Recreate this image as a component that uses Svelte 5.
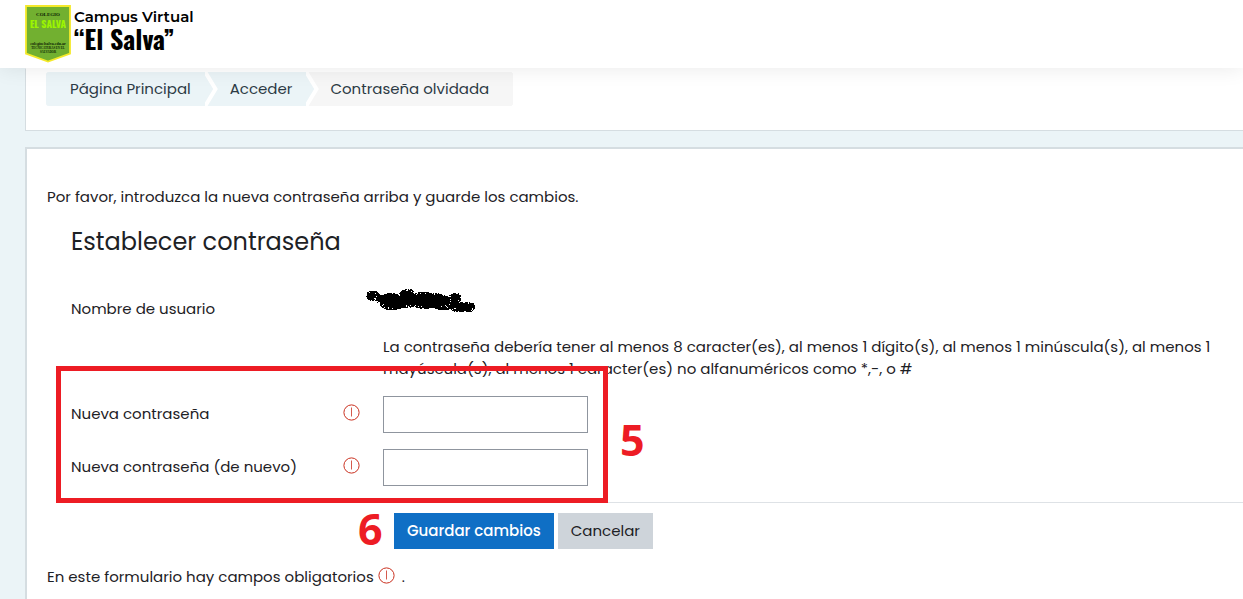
<script>
  const crumbs = ['Página Principal', 'Acceder', 'Contraseña olvidada'];
  const fields = [
    { id: 'password', label: 'Nueva contraseña' },
    { id: 'password2', label: 'Nueva contraseña (de nuevo)' }
  ];

  // Spray-brush blots: centre x, centre y, half width, half height.
  const blots = [
    [6, 6, 7, 5], [14, 9, 5, 4], [24, 9, 10, 6], [25, 14, 12, 6], [40, 5, 8, 6],
    [38, 12, 12, 6], [46, 10, 12, 5], [58, 13, 12, 6], [66, 10, 14, 7], [76, 13, 12, 7],
    [88, 8, 6, 5], [92, 17, 9, 5], [101, 17, 7, 5], [56, 6, 10, 4]
  ];
  let seed = 7;
  const random = () => (seed = (seed * 16807) % 2147483647) / 2147483647;
  const specks = blots
    .flatMap(([x, y, w, h]) =>
      Array.from({ length: w * h * 9 }, () => {
        const angle = random() * Math.PI * 2;
        const reach = random() ** 0.7;
        const px = Math.floor(x + Math.cos(angle) * reach * w);
        const py = Math.floor(y + Math.sin(angle) * reach * h);
        return `M${px} ${py}h1v1h-1z`;
      })
    )
    .join('');
</script>

{#snippet required()}
  <svg class="required" viewBox="0 0 17 17" role="img" aria-label="Obligatorio">
    <circle cx="8.5" cy="8.5" r="7.6" />
    <path d="M8.5 3.500v9" />
  </svg>
{/snippet}

<div class="page">
  <header>
    <a class="brand" href="#inicio">
      <svg class="shield" viewBox="0 0 46 58" aria-hidden="true">
        <path d="M1 1H45V48.500L23 56.500L1 48.500Z" fill="#72b030" stroke="#f4e92a" stroke-width="1.800" />
        <text class="serif" x="23" y="10.500" font-size="5">COLEGIO</text>
        <text class="crest" x="23" y="22.500" font-size="10">EL SALVA</text>
        <text class="serif" x="23" y="39.500" font-size="4">colegioelsalva.edu.ar</text>
        <text class="serif" x="23" y="43.500" font-size="3">TECNICATURAS EN EL</text>
        <text class="serif" x="23" y="47.500" font-size="3">SALVADOR</text>
      </svg>
      <span class="wordmark">
        <span class="campus">Campus Virtual</span>
        <span class="school">“El Salva”</span>
      </span>
    </a>
  </header>

  <main>
    <nav class="card trail" aria-label="Ruta">
      <ol>
        {#each crumbs as crumb, i}
          <li class:current={i === crumbs.length - 1}>
            {#if i < crumbs.length - 1}
              <a href="#ruta">{crumb}</a>
              <svg class="chevron" viewBox="0 0 14 34" aria-hidden="true">
                <path class="before" d="M0 0L10 17L0 34Z" />
                <path class="gap" d="M-1 -2L10.500 17L-1 36" />
              </svg>
            {:else}
              <span>{crumb}</span>
            {/if}
          </li>
        {/each}
      </ol>
    </nav>

    <section class="card content">
      <p class="intro">Por favor, introduzca la nueva contraseña arriba y guarde los cambios.</p>
      <form onsubmit={(e) => e.preventDefault()}>
        <h1>Establecer contraseña</h1>
        <div class="row user">
          <span>Nombre de usuario</span>
          <svg class="scribble" viewBox="0 0 108 24" aria-hidden="true">
            <path d={specks} />
          </svg>
        </div>
        <p class="hint">La contraseña debería tener al menos 8 caracter(es), al menos 1 dígito(s), al menos 1 minúscula(s), al menos 1 mayúscula(s), al menos 1 caracter(es) no alfanuméricos como *,-, o #</p>
        {#each fields as field}
          <div class="row field">
            <label for={field.id}>{field.label}</label>
            {@render required()}
            <input type="password" id={field.id} />
          </div>
        {/each}
        <div class="actions">
          <button class="save" type="submit">Guardar cambios</button>
          <button type="button">Cancelar</button>
        </div>
        <p class="note">En este formulario hay campos obligatorios {@render required()} .</p>
      </form>
    </section>
  </main>

  <div class="frame"></div>
  <span class="step five">5</span>
  <span class="step six">6</span>
</div>

<style>
  :global(body) {
    margin: 0;
    background: #ebf4f7;
  }
  .page {
    position: relative;
    display: flex;
    flex-direction: column;
    height: 100vh;
    overflow: hidden;
    color: #1d2125;
    font: 15px/22px Poppins, Inter, sans-serif;
  }
  header {
    position: relative;
    z-index: 1;
    flex: none;
    height: 63px;
    padding: 5px 25px 0;
    background: #fff;
    box-shadow: 0 0 20px rgba(0, 0, 0, 0.09);
  }
  .brand {
    display: inline-flex;
    gap: 3px;
    color: #000;
    text-decoration: none;
  }
  .shield {
    width: 46px;
    height: 58px;
  }
  .shield text {
    text-anchor: middle;
    font-weight: bold;
  }
  .serif {
    fill: #0c2203;
    font-family: "Liberation Serif", serif;
  }
  .crest {
    fill: #9cf500;
    font-family: Oswald, "Liberation Sans Narrow", sans-serif;
  }
  .wordmark {
    display: flex;
    flex-direction: column;
    white-space: nowrap;
  }
  .campus {
    font: 600 15px/23px Montserrat, Inter, sans-serif;
  }
  .school {
    font: bold 26px/22px Oswald, "Liberation Sans Narrow", sans-serif;
  }
  main {
    display: flex;
    flex: 1;
    flex-direction: column;
    gap: 16px;
    padding-left: 25px;
  }
  .card {
    border: 1px solid #d5dde1;
    border-right: 0;
    background: #fff;
  }
  .trail {
    padding: 3px 20px 24px;
    border-top: 1px solid #fff;
  }
  ol {
    display: inline-flex;
    margin: 0;
    padding: 0;
    overflow: hidden;
    border-radius: 3px;
    background: #f6f6f6;
    list-style: none;
    vertical-align: top;
  }
  li {
    display: flex;
    height: 34px;
    line-height: 34px;
    background: #ebf4f7;
  }
  li a,
  li span {
    padding-left: 24px;
    color: #2d3b45;
    text-decoration: none;
  }
  li:not(:first-child) a {
    padding-left: 11px;
  }
  li a {
    padding-right: 14px;
  }
  li.current {
    padding-right: 24px;
    background: #f6f6f6;
  }
  li.current span {
    padding-left: 10px;
  }
  .chevron {
    width: 14px;
    height: 34px;
  }
  li:nth-last-child(2) .chevron {
    background: #f6f6f6;
  }
  .before {
    fill: #ebf4f7;
  }
  .gap {
    fill: none;
    stroke: #fff;
    stroke-width: 4;
  }
  .content {
    flex: 1;
    padding: 37px 20px 0;
    border-width: 2px 0 0 2px;
  }
  p {
    margin: 0;
  }
  form {
    padding-left: 24px;
  }
  h1 {
    margin: 16px 0 0;
    font-size: 24px;
    font-weight: 400;
    line-height: 36px;
  }
  .row {
    display: grid;
    grid-template-columns: 272px 40px 1fr;
    align-items: center;
  }
  .user {
    margin-top: 32px;
    height: 34px;
  }
  .user .scribble {
    grid-column: 3;
    width: 108px;
    height: 24px;
    margin: -14px 0 0 -16px;
    overflow: visible;
  }
  .scribble path {
    fill: #000;
    shape-rendering: crispEdges;
  }
  .hint {
    max-width: 840px;
    margin: 10px 0 16px 312px;
  }
  .field {
    height: 37px;
    margin-bottom: 16px;
  }
  .field label {
    padding-bottom: 2px;
  }
  .required {
    width: 17px;
    height: 17px;
    fill: none;
    stroke: #ca3120;
    stroke-width: 1;
  }
  .required path {
    opacity: 0.8;
  }
  .field .required {
    margin-bottom: 4px;
  }
  input {
    box-sizing: border-box;
    width: 205px;
    height: 37px;
    padding: 6px 12px;
    border: 1px solid #8f959e;
    border-radius: 0;
    background: #fff;
    font: inherit;
  }
  .actions {
    display: flex;
    gap: 4px;
    margin-right: -20px;
    padding: 10px 0 0 323px;
    border-top: 1px solid #dee2e6;
  }
  button {
    height: 36px;
    padding: 0 13px;
    border: 0;
    background: #ced4da;
    color: #1d2125;
    font: inherit;
  }
  .save {
    background: #0f6fc5;
    color: #fff;
    font-weight: 500;
  }
  .note {
    margin: 17px 0 0 -24px;
  }
  .note .required {
    margin-right: 3px;
    vertical-align: -2px;
  }
  .frame {
    position: absolute;
    z-index: 2;
    top: 366px;
    left: 56px;
    box-sizing: border-box;
    width: 552px;
    height: 137px;
    border: 5px solid #ed1c24;
    pointer-events: none;
  }
  .step {
    position: absolute;
    z-index: 2;
    color: #ed1c24;
    font: bold 43px/48px "Open Sans", sans-serif;
  }
  .five {
    top: 416px;
    left: 620px;
  }
  .six {
    top: 505px;
    left: 358px;
  }
</style>
